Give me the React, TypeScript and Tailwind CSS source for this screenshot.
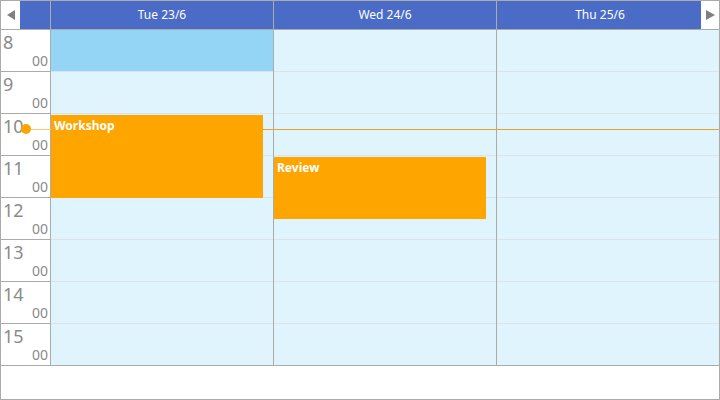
const hours = [8, 9, 10, 11, 12, 13, 14, 15]

const days = [
  { label: "Tue 23/6", selected: 8, events: [{ title: "Workshop", top: 85, height: 83 }] },
  { label: "Wed 24/6", selected: -1, events: [{ title: "Review", top: 127, height: 62 }] },
  { label: "Thu 25/6", selected: -1, events: [] as { title: string; top: number; height: number }[] },
]

const font = { fontFamily: '"Noto Sans", "Open Sans", sans-serif' }

function Arrow({ dir }: { dir: "left" | "right" }) {
  return (
    <svg width="9" height="10" viewBox="0 0 9 10">
      <path d={dir === "left" ? "M8 0 L8 10 L0 5 Z" : "M0 0 L0 10 L9 5 Z"} fill="#808080" />
    </svg>
  )
}

const App = () => {
  return (
    <div className="w-[720px] h-[400px] bg-white border border-[#ababab] flex flex-col" style={font}>
      {/* Header */}
      <div className="flex h-[29px] border-b border-[#ababab] bg-[#4a6bc6] text-white text-[12px] shrink-0">
        <div className="w-[50px] flex border-r border-[#ababab]">
          <div className="w-[19px] bg-white flex items-center justify-center pl-[1px]">
            <Arrow dir="left" />
          </div>
        </div>
        <div className="w-[223px] border-r border-[#ababab] flex items-center justify-center">Tue 23/6</div>
        <div className="w-[223px] border-r border-[#ababab] flex items-center justify-center">Wed 24/6</div>
        <div className="flex-1 flex">
          <div className="flex-1 flex items-center justify-center pl-[2px]">Thu 25/6</div>
          <div className="w-[18px] bg-white flex items-center justify-center pl-[1px]">
            <Arrow dir="right" />
          </div>
        </div>
      </div>

      {/* Body */}
      <div className="relative flex shrink-0">
        <div className="w-[50px] border-r border-[#ababab] bg-white">
          {hours.map((h) => (
            <div key={h} className="h-[42px] border-b border-[#ababab] relative text-[#8a8a8a]">
              <span className="absolute left-[2px] top-[1px] text-[18px] leading-[22px]">{h}</span>
              <span className="absolute right-[2px] bottom-[1px] text-[14px] leading-[18px]">00</span>
            </div>
          ))}
        </div>

        {days.map((d, di) => (
          <div
            key={d.label}
            className={di < 2 ? "w-[223px] border-r border-[#ababab] relative" : "flex-1 relative"}
          >
            {hours.map((h, hi) => (
              <div
                key={h}
                className={
                  (h === d.selected ? "bg-[#94d5f5] " : "bg-[#e0f4fd] ") +
                  (hi === hours.length - 1 ? "h-[42px] border-b border-[#ababab]" : "h-[42px] border-b border-[#dde2e6]")
                }
              />
            ))}
            {d.events.map((e) => (
              <div
                key={e.title}
                className="absolute left-0 w-[212px] bg-[#ffa500] text-white text-[12px] font-bold px-[3px] pt-[3px] leading-[16px] z-20"
                style={{ top: e.top, height: e.height }}
              >
                {e.title}
              </div>
            ))}
          </div>
        ))}

        {/* Current time indicator */}
        <div className="absolute left-[20px] right-0 top-[94px] h-[10px] flex items-center z-10 pointer-events-none">
          <div className="w-[10px] h-[10px] rounded-full bg-[#ffa500] shrink-0" />
          <div className="w-[20px] h-[1px] bg-[#ffc870]" />
          <div className="flex-1 h-[1px] bg-[#f0a020]" />
        </div>
      </div>

      <div className="flex-1 bg-white" />
    </div>
  )
}

export default App
